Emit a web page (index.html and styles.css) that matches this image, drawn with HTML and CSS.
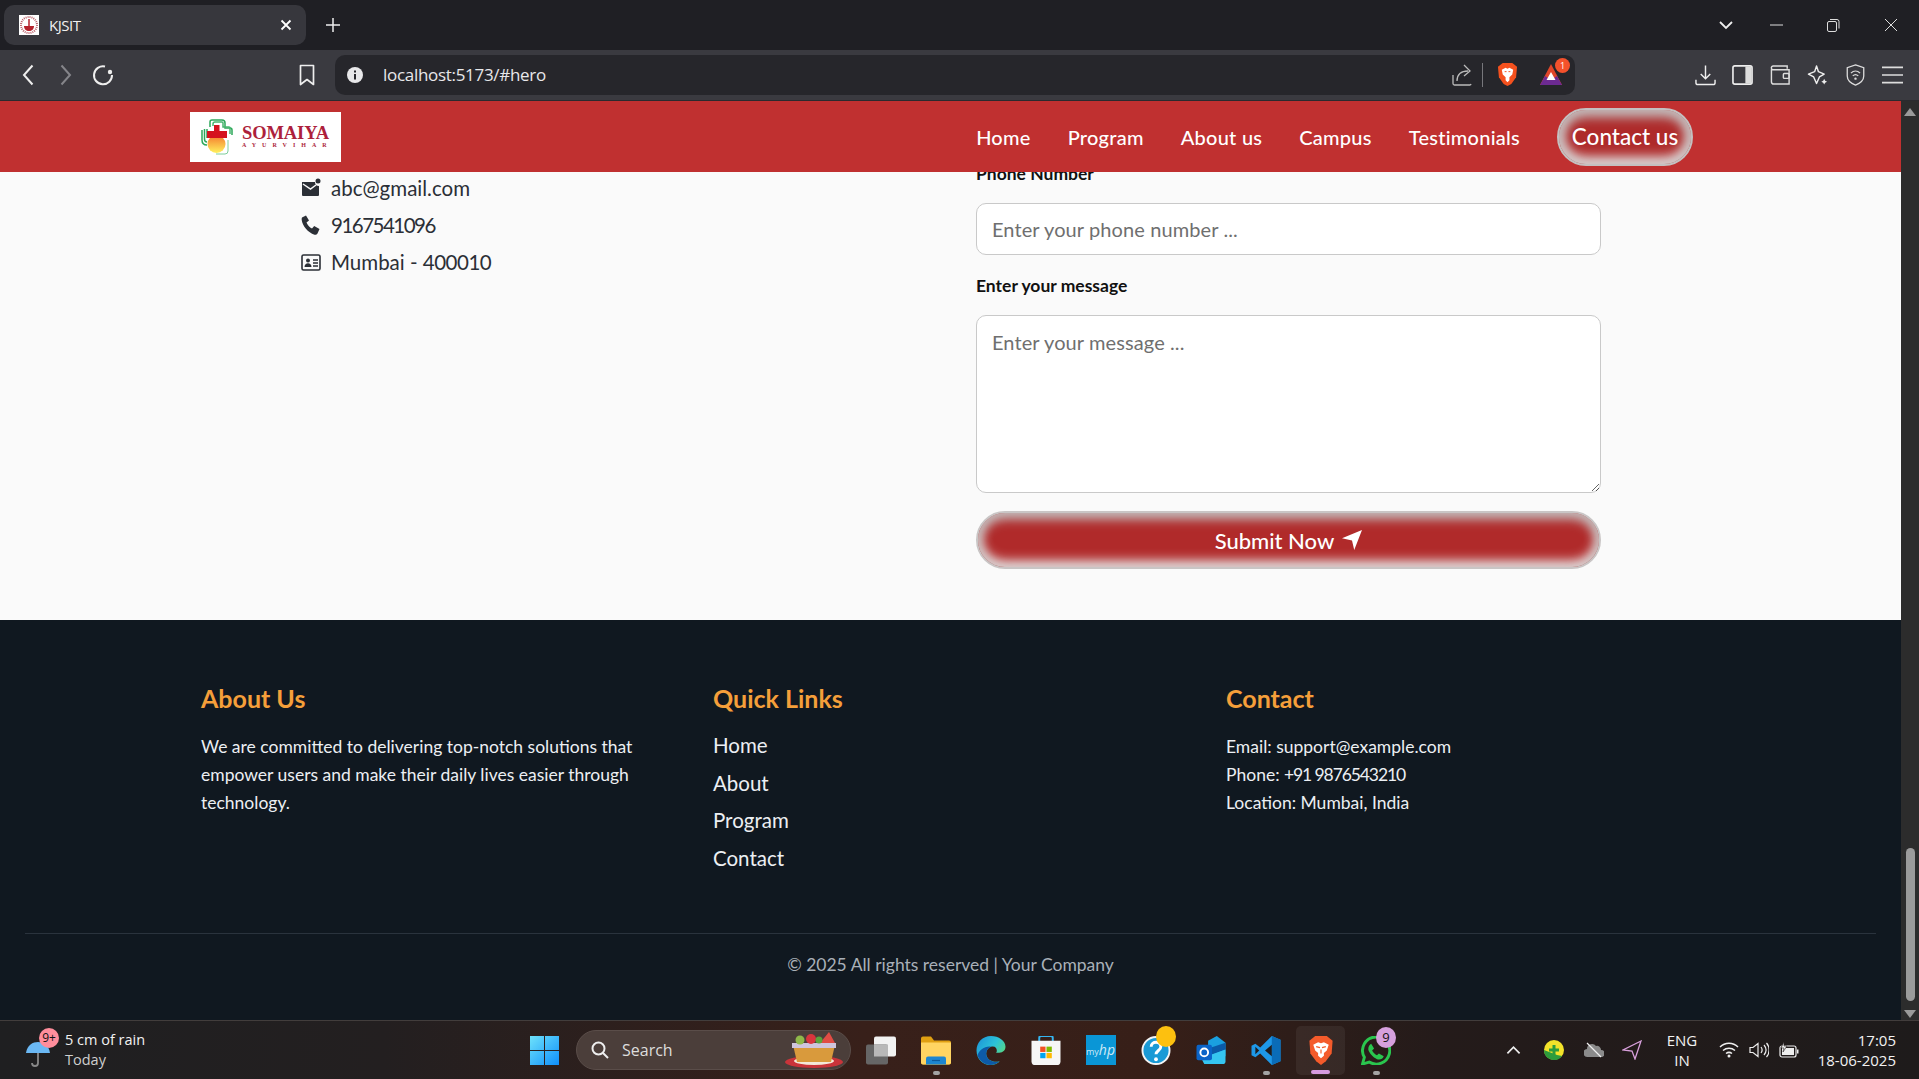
FILE: index.html
```html
<!DOCTYPE html>
<html lang="en">
<head>
<meta charset="utf-8">
<title>KJSIT</title>
<link rel="stylesheet" href="styles.css">
</head>
<body>
<div class="tabstrip">
  <div class="tab">
    <svg class="favicon" viewBox="0 0 20 20"><rect width="20" height="20" fill="#fff"/><circle cx="10" cy="10" r="8" fill="none" stroke="#b9606a" stroke-width="2" stroke-dasharray="1 1"/><path d="M5 11h10c0 3-2 5-5 5s-5-2-5-5z" fill="#b5222c"/><path d="M10 4v7" stroke="#b5222c" stroke-width="1.5"/></svg>
    <span class="tab-title">KJSIT</span>
    <svg class="tab-close" viewBox="0 0 12 12"><path d="M1.5 1.5l9 9M10.500 1.500l-9 9" stroke="#fff" stroke-width="1.800"/></svg>
  </div>
  <svg class="tab-plus" viewBox="0 0 14 14"><path d="M7 0v14M0 7h14" stroke="#eee" stroke-width="1.500"/></svg>
  <div class="win-controls">
    <svg class="wc wc-chev" viewBox="0 0 14 14"><path d="M1 4l6 6 6-6" fill="none" stroke="#eee" stroke-width="1.800"/></svg>
    <svg class="wc wc-min" viewBox="0 0 14 14"><path d="M0 7h13" stroke="#ddd" stroke-width="1"/></svg>
    <svg class="wc wc-max" viewBox="0 0 14 14"><rect x="1.500" y="3.500" width="9" height="10" rx="1.500" fill="none" stroke="#ddd"/><path d="M4 1.500h7a2 2 0 0 1 2 2v7" fill="none" stroke="#ddd"/></svg>
    <svg class="wc wc-close" viewBox="0 0 14 14"><path d="M1 1l12 12M13 1L1 13" stroke="#ddd" stroke-width="1"/></svg>
  </div>
</div>

<div class="toolbar">
  <div class="nav-btns">
    <svg class="ti-back" viewBox="0 0 12 22"><path d="M10.500 1.500L2 11l8.500 9.500" fill="none" stroke="#eee" stroke-width="2"/></svg>
    <svg class="ti-fwd" viewBox="0 0 12 22"><path d="M1.500 1.500L10 11l-8.500 9.500" fill="none" stroke="#85858a" stroke-width="2"/></svg>
    <svg class="ti-reload" viewBox="0 0 22 22"><path d="M13 2.500a9 9 0 1 0 7 8.500" fill="none" stroke="#eee" stroke-width="2"/><circle cx="18" cy="8" r="2.200" fill="#eee"/></svg>
  </div>
  <svg class="ti-bookmark" viewBox="0 0 16 22"><path d="M1.500 1.500h13v19L8 15.500l-6.500 5z" fill="none" stroke="#eee" stroke-width="1.700" stroke-linejoin="round"/></svg>
  <div class="urlbar">
    <svg class="ti-info" viewBox="0 0 16 16"><circle cx="8" cy="8" r="8" fill="#e8e8ea"/><rect x="7" y="7" width="2" height="5.500" fill="#26262b"/><rect x="7" y="3.500" width="2" height="2" fill="#26262b"/></svg>
    <span class="url-text">localhost:5173/#hero</span>
    <svg class="ti-share" viewBox="0 0 20 24"><path d="M1 12v8.500a1.500 1.500 0 0 0 1.500 1.500H18a1.500 1.500 0 0 0 1-1" fill="none" stroke="#bbb" stroke-width="1.300"/><path d="M5 18c0-7 4-10 11-10M12 2l6 6-6 5" fill="none" stroke="#bbb" stroke-width="1.300"/></svg>
    <span class="url-sep"></span>
    <svg class="ti-brave" viewBox="0 0 22 26"><path d="M6 1h10l5 4-1 11-5 7-4 2-4-2-5-7L1 5z" fill="#f4511e"/><path d="M5 8l4-2 2 1 2-1 4 2-1 5-3 3v3l-2 2-2-2v-3l-3-3z" fill="#fff"/><path d="M8 10h2M12 10h2" stroke="#f4511e" stroke-width="1"/></svg>
    <div class="bat">
      <svg class="ti-bat" viewBox="0 0 24 24"><path d="M12 1l11 21H1z" fill="#e0462a"/><path d="M1 22l5-9 6 4 6-4 5 9z" fill="#6c2a92"/><path d="M12 9l4.500 8h-9z" fill="#fff"/></svg>
      <span class="bat-badge">1</span>
    </div>
  </div>
  <div class="tools">
    <svg class="tool" viewBox="0 0 22 22"><path d="M11 1v13M6 10l5 5 5-5" fill="none" stroke="#eee" stroke-width="1.500"/><path d="M1 16v3a2 2 0 0 0 2 2h16a2 2 0 0 0 2-2v-3" fill="none" stroke="#eee" stroke-width="1.500"/></svg>
    <svg class="tool" viewBox="0 0 22 22"><rect x="1" y="1.500" width="20" height="19" rx="2" fill="none" stroke="#eee" stroke-width="1.700"/><rect x="14" y="2" width="6.500" height="18" fill="#ddd"/></svg>
    <svg class="tool" viewBox="0 0 22 22"><path d="M3 1.500h15v3M1.500 5v13a2.500 2.500 0 0 0 2.500 2.500h16V5.500H3A1.500 1.500 0 0 1 1.500 4a2 2 0 0 1 1.500-2.500" fill="none" stroke="#ddd" stroke-width="1.500"/><rect x="14" y="9.500" width="6" height="5" rx="1" fill="none" stroke="#ddd" stroke-width="1.500"/></svg>
    <svg class="tool" viewBox="0 0 22 22"><path d="M10 1.500l2 6 6 2.500-5 3-3 7-3-7-5.500-3 6.500-2.500z" fill="none" stroke="#eee" stroke-width="1.500" stroke-linejoin="round"/><path d="M18 15l1 2 2 1-2 1-1 2-1-2-2-1 2-1z" fill="#eee"/></svg>
    <svg class="tool" viewBox="0 0 22 24"><path d="M11 1l9 3v9c0 5-4 8-9 10-5-2-9-5-9-10V4z" fill="none" stroke="#ddd" stroke-width="1.400"/><path d="M6 10c3-3 7-3 10 0M8 13c2-2 4-2 6 0" fill="none" stroke="#ddd" stroke-width="1.400"/><circle cx="11" cy="16" r="1.300" fill="#ddd"/></svg>
    <svg class="tool" viewBox="0 0 22 22"><path d="M0 3h22M0 11h22M0 19h22" stroke="#ddd" stroke-width="1.800"/></svg>
  </div>
</div>

<div class="viewport">
  <div class="page">
    <header class="site-header">
      <div class="logo">
        <svg class="logo-mark" viewBox="0 0 32 36">
          <defs><linearGradient id="sun" x1="0" y1="0" x2="0" y2="1"><stop offset="0" stop-color="#f4792c"/><stop offset="1" stop-color="#fff15e"/></linearGradient></defs>
          <path d="M9 8V3a2 2 0 0 1 2-2h10a3 3 0 0 1 3 3v5h5a2 2 0 0 1 2 2v5" fill="none" stroke="#2da85a" stroke-width="1.500"/>
          <path d="M12 7V5a2 2 0 0 1 2-2h7a1 1 0 0 1 1 1v4h6a1 1 0 0 1 1 1v6" fill="none" stroke="#45b56d" stroke-width="1.500"/>
          <path d="M1 11v10c0 3 1.500 5 5 5M3.500 10v10c0 2 1 3 2.500 3M6 10v9" fill="none" stroke="#2da85a" stroke-width="1.500"/>
          <circle cx="15.500" cy="25" r="9" fill="url(#sun)"/>
          <path d="M13 6h5.500v6H26v7H6v-7h7z" fill="#d5121e"/>
          <path d="M27 21v11a3 3 0 0 1-3 3H15" fill="none" stroke="#7fce9a" stroke-width="1"/>
        </svg>
        <div class="logo-text">
          <span class="logo-name">SOMAIYA</span>
          <span class="logo-sub">AYURVIHAR</span>
        </div>
      </div>
      <nav class="site-nav">
        <a>Home</a><a>Program</a><a>About us</a><a>Campus</a><a>Testimonials</a>
      </nav>
      <a class="contact-btn">Contact us</a>
    </header>
    <section class="contact">
      <div class="contact-info">
        <div class="info-row">
          <svg class="info-icon" viewBox="0 0 20 20"><path d="M1 4h13a4 4 0 0 0 4 4v9a1 1 0 0 1-1 1H2a1 1 0 0 1-1-1z" fill="#2b2f36"/><path d="M2 6l7.500 5L15 7" fill="none" stroke="#fafafa" stroke-width="1.500"/><circle cx="17" cy="3" r="2.500" fill="#2b2f36"/></svg>
          <span>abc@gmail.com</span>
        </div>
        <div class="info-row">
          <svg class="info-icon" viewBox="0 0 20 20"><path d="M1 2.500L5 .5l3 5-2.500 2c1 2.500 3 5 5.500 6l2.200-2.500 5.300 3-2 4.500c-.5 1-2 1.500-3 1.200C7 17.500 1.500 11 .7 5c-.1-1 0-2 .3-2.500z" fill="#2b2f36"/></svg>
          <span class="tight-phone">9167541096</span>
        </div>
        <div class="info-row">
          <svg class="info-icon" viewBox="0 0 20 20"><rect x="1" y="3" width="18" height="15" rx="1.500" fill="none" stroke="#2b2f36" stroke-width="1.600"/><circle cx="7" cy="8.500" r="2" fill="#2b2f36"/><path d="M3.500 15c0-5 7-5 7 0z" fill="#2b2f36"/><path d="M12 8h5M12 11h5M12 14h5" stroke="#2b2f36" stroke-width="1.300"/></svg>
          <span>Mumbai - <span class="tight-pin">400010</span></span>
        </div>
      </div>
      <form class="contact-form">
        <label class="field-label">Phone Number</label>
        <input class="field-input" placeholder="Enter your phone number ...">
        <label class="field-label label-msg">Enter your message</label>
        <textarea class="field-area" placeholder="Enter your message ..."></textarea>
        <button class="submit-btn" type="button">Submit Now
          <svg class="submit-icon" viewBox="0 0 18 18"><path d="M18 0L11 18 9 9.500 0 7.500z" fill="#fff"/></svg>
        </button>
      </form>
    </section>
    <footer class="site-footer">
      <div class="footer-cols">
        <div>
          <h3 class="footer-title">About Us</h3>
          <p class="footer-text">We are committed to delivering top-notch solutions that<br>empower users and make their daily lives easier through<br>technology.</p>
        </div>
        <div>
          <h3 class="footer-title">Quick Links</h3>
          <ul class="footer-links"><li>Home</li><li>About</li><li>Program</li><li>Contact</li></ul>
        </div>
        <div>
          <h3 class="footer-title">Contact</h3>
          <p class="footer-text">Email: support@example.com<br>Phone: <span class="tight-digits-sm">+91 9876543210</span><br>Location: Mumbai, India</p>
        </div>
      </div>
      <div class="footer-bottom">© 2025 All rights reserved | Your Company</div>
    </footer>
  </div>
  <div class="scrollbar">
    <svg class="sb-arrow" viewBox="0 0 12 8"><path d="M6 0l6 8H0z" fill="#9a9a9a"/></svg>
    <div class="sb-track"><div class="sb-thumb"></div></div>
    <svg class="sb-arrow" viewBox="0 0 12 8"><path d="M6 8L0 0h12z" fill="#9a9a9a"/></svg>
  </div>
</div>

<div class="taskbar">
  <div class="weather">
    <div class="weather-icon">
      <svg class="umbrella" viewBox="0 0 24 28"><path d="M12 12v11a3 3 0 0 1-6 0" fill="none" stroke="#888" stroke-width="1.800"/><path d="M0 13C1 5 7 2 12 2s11 3 12 11z" fill="#6bb8f4"/></svg>
      <span class="weather-badge">9+</span>
    </div>
    <div class="weather-text"><span>5 cm of rain</span><span class="weather-sub">Today</span></div>
  </div>
  <svg class="win-logo" viewBox="0 0 29 29">
    <defs><linearGradient id="wl" x1="0" y1="0" x2="1" y2="1"><stop offset="0" stop-color="#6ee2fb"/><stop offset="1" stop-color="#0f8ffa"/></linearGradient></defs>
    <path d="M0 0h14v14H0zM15 0h14v14H15zM0 15h14v14H0zM15 15h14v14H15z" fill="url(#wl)"/>
  </svg>
  <div class="search-pill">
    <svg class="search-icon" viewBox="0 0 18 18"><circle cx="7.500" cy="7.500" r="6" fill="none" stroke="#eee" stroke-width="2"/><path d="M12 12l5 5" stroke="#eee" stroke-width="2"/></svg>
    <span class="search-text">Search</span>
    <svg class="basket" viewBox="0 0 60 36">
      <ellipse cx="30" cy="30" rx="29" ry="6" fill="#c9343a"/><ellipse cx="30" cy="29" rx="20" ry="4" fill="#f3e8d8"/>
      <path d="M9 13h42l-4 17H13z" fill="#d99a3c"/><rect x="8" y="11" width="44" height="5" fill="#cfc4dc"/>
      <circle cx="16" cy="8" r="4.500" fill="#8fb84a"/><circle cx="27" cy="7" r="5" fill="#d8343d"/><path d="M36 11L45 0l6 11z" fill="#e14c44"/><circle cx="35" cy="8" r="3.500" fill="#5ba23c"/>
    </svg>
  </div>
  <div class="apps">
    <div class="app"><svg viewBox="0 0 30 28"><rect x="8" width="22" height="20" rx="2" fill="#f2f2f2"/><rect y="8" width="22" height="20" rx="2" fill="#666"/><rect x="8" y="8" width="14" height="12" fill="#b8b8b8"/></svg></div>
    <div class="app running"><svg viewBox="0 0 30 28"><path d="M0 2a2 2 0 0 1 2-2h8l3 4h15a2 2 0 0 1 2 2v20a2 2 0 0 1-2 2H2a2 2 0 0 1-2-2z" fill="#e0a012"/><path d="M0 6h30v20a2 2 0 0 1-2 2H2a2 2 0 0 1-2-2z" fill="#ffd562"/><path d="M5 22a2 2 0 0 1 2-2h16a2 2 0 0 1 2 2v6H5z" fill="#1c86d0"/><path d="M11 24h8" stroke="#0b5a9c" stroke-width="1.200"/></svg></div>
    <div class="app"><svg viewBox="0 0 30 30"><defs><linearGradient id="edge" x1="0" y1="0" x2="1" y2=".7"><stop offset="0" stop-color="#1b8fd8"/><stop offset=".55" stop-color="#2cc3d8"/><stop offset="1" stop-color="#62dc70"/></linearGradient></defs><path d="M15 0C6 0 0 7 0 15c0 9 7 15 14 15 5 0 8-2 10-4-6 2-14-1-14-8 0-3 2-6 5-7 4-1 6 1 6 4 0 1 0 2-1 2 3 1 10 0 10-6C30 5 23 0 15 0z" fill="url(#edge)"/><path d="M24 26c-6 2-14-1-14-8 0-3 2-6 5-7-6-1-12 3-14 9 2 6 8 10 13 10 4 0 8-2 10-4z" fill="#0d5aa8"/></svg></div>
    <div class="app"><svg viewBox="0 0 30 30"><path d="M8 7V2a2 2 0 0 1 2-2h10a2 2 0 0 1 2 2v5" fill="none" stroke="#35b5f0" stroke-width="2"/><path d="M0 5h30v21a4 4 0 0 1-4 4H4a4 4 0 0 1-4-4z" fill="#f6f6f6"/><rect x="9" y="11" width="5.500" height="5.500" fill="#f25022"/><rect x="15.500" y="11" width="5.500" height="5.500" fill="#7fba00"/><rect x="9" y="17.500" width="5.500" height="5.500" fill="#00a4ef"/><rect x="15.500" y="17.500" width="5.500" height="5.500" fill="#ffb900"/></svg></div>
    <div class="app"><div class="hp-tile">my<i class="hp-word">hp</i></div></div>
    <div class="app app-badged"><svg viewBox="0 0 30 30"><circle cx="15" cy="15" r="14" fill="#1a9ad6" stroke="#f4f4f4" stroke-width="2"/><path d="M10 11c0-6 10-6 10 0 0 4-5 4-5 8" fill="none" stroke="#fff" stroke-width="3"/><circle cx="15" cy="24" r="2" fill="#fff"/></svg><span class="dot-yellow"></span></div>
    <div class="app"><svg viewBox="0 0 30 30"><path d="M12 5l9-5 9 7v14H12z" fill="#1aa0e0"/><path d="M12 13l18-6v7l-18 7z" fill="#0a5aa8"/><path d="M5 23l25-9v12a3 3 0 0 1-3 3H8z" fill="#35c5f0"/><rect y="9" width="16" height="16" rx="2" fill="#0a64c8"/><circle cx="8" cy="17" r="4" fill="none" stroke="#fff" stroke-width="2"/></svg></div>
    <div class="app running"><svg viewBox="0 0 30 30"><path d="M21 0l9 4v22l-9 4L9 18l-5 4-4-2V10l4-2 5 4z" fill="#1e98e8"/><path d="M21 0v30l9-4V4z" fill="#0a6cb8"/><path d="M21 9l-7 6 7 6zM4 11v8l4-4z" fill="#201d1f"/></svg></div>
    <div class="app app-active"><svg viewBox="0 0 26 30"><path d="M7 0h12l6 5-1 13-6 8-5 4-5-4-6-8L1 5z" fill="#f4511e"/><path d="M5 9l5-2.500 3 1 3-1 5 2.500-2 6-3 2.500v3l-3 2.500-3-2.500v-3L7 15z" fill="#fff"/><path d="M8 11l4 1M18 11l-4 1M13 14v4" stroke="#f4511e" stroke-width="1.200"/></svg><span class="active-bar"></span></div>
    <div class="app running app-badged"><svg viewBox="0 0 30 30"><path d="M15 1a14 14 0 0 0-12 21L1 29l7-2A14 14 0 1 0 15 1z" fill="none" stroke="#2ac54e" stroke-width="3"/><path d="M10 8l3 5-2 2c1 2 3 4 5 5l2-2 5 3c-1 3-4 4-7 3-4-2-8-6-9-10 0-3 1-5 3-6z" fill="#2ac54e"/></svg><span class="dot-purple">9</span></div>
  </div>
  <div class="tray">
    <svg class="tray-caret" viewBox="0 0 16 10"><path d="M1.500 8.500L8 2l6.500 6.500" fill="none" stroke="#eee" stroke-width="1.800"/></svg>
    <svg class="tray-ico tray-green" viewBox="0 0 20 20"><circle cx="10" cy="10" r="10" fill="#f3e32a"/><path d="M0 10a10 10 0 0 0 18 6l-5-1z" fill="#2c9c3c"/><path d="M10 5v10M5 10h10" stroke="#2c9c3c" stroke-width="3"/></svg>
    <svg class="tray-ico tray-cloud" viewBox="0 0 20 16"><path d="M4 15a4 4 0 0 1-1-8 5 5 0 0 1 9-3 4 4 0 0 1 5 4 3.500 3.500 0 0 1 0 7z" fill="#8b8b8b"/><path d="M3 1l14 14" stroke="#eee" stroke-width="1.300"/></svg>
    <svg class="tray-ico tray-send" viewBox="0 0 20 20"><path d="M19 1L1 10l9 1 3 8z" fill="none" stroke="#d8a0dc" stroke-width="1.300"/></svg>
    <div class="tray-lang"><span>ENG</span><span>IN</span></div>
    <svg class="tray-ico tray-wifi" viewBox="0 0 20 16"><path d="M1 5c5-5 13-5 18 0M4 8.500c3.500-3 8.500-3 12 0M7 11.500c2-1.500 4-1.500 6 0" fill="none" stroke="#eee" stroke-width="1.500"/><circle cx="10" cy="14" r="1.500" fill="#eee"/></svg>
    <svg class="tray-ico tray-vol" viewBox="0 0 20 16"><path d="M1 5.500h3L9 1.500v13L4 10.500H1z" fill="none" stroke="#eee" stroke-width="1.200"/><path d="M12 5c1.500 2 1.500 4 0 6M15 3c2.500 3 2.500 7 0 10M17.500 1c3.500 4 3.500 10 0 14" fill="none" stroke="#eee" stroke-width="1.200"/></svg>
    <svg class="tray-ico tray-batt" viewBox="0 0 20 16"><rect x="1" y="4" width="16" height="11" rx="2" fill="none" stroke="#eee" stroke-width="1.200"/><rect x="3" y="6" width="12" height="7" fill="#eee"/><rect x="18" y="7.500" width="1.500" height="4" fill="#eee"/><path d="M5 0L2 6h3l-1 4 4-6H5z" fill="#eee" stroke="#211d1c" stroke-width=".6"/></svg>
    <div class="tray-clock"><span>17:05</span><span>18-06-2025</span></div>
  </div>
</div>
</body>
</html>
```

FILE: styles.css
```css
* { box-sizing: border-box; }
html, body { margin: 0; height: 100%; overflow: hidden; }
body {
  width: 1919px;
  height: 1079px;
  display: flex;
  flex-direction: column;
  font-family: "Lato", "Open Sans", sans-serif;
  background: #fafafa;
}

/* Browser chrome */
.tabstrip {
  height: 50px;
  flex: none;
  background: #1f1f24;
  display: flex;
  align-items: center;
  padding-left: 4px;
}
.tab {
  width: 302px;
  height: 40px;
  background: #37373d;
  border-radius: 10px;
  display: flex;
  align-items: center;
  padding: 0 14px 0 15px;
}
.favicon { width: 20px; height: 20px; }
.tab-title {
  margin-left: 10px;
  color: #f0f0f0;
  font: 15px "Open Sans", sans-serif;
  letter-spacing: -.5px;
  flex: 1;
}
.tab-close { width: 12px; height: 12px; }
.tab-plus { width: 14px; height: 14px; margin-left: 20px; }
.win-controls { margin-left: auto; display: flex; align-items: center; height: 100%; }
.wc { width: 14px; height: 14px; }
.wc-chev { margin-right: 37px; }
.wc-min { margin-right: 42px; }
.wc-max { margin-right: 44px; }
.wc-close { margin-right: 21px; }

.toolbar {
  height: 51px;
  flex: none;
  background: #3a3a40;
  border-bottom: 1px solid #2a2a2e;
  display: flex;
  align-items: center;
  padding-bottom: 1px;
}
.nav-btns { display: flex; align-items: center; padding-left: 22px; width: 299px; }
.ti-back, .ti-fwd { width: 12px; height: 22px; }
.ti-fwd { margin-left: 26px; }
.ti-reload { width: 22px; height: 22px; margin-left: 20px; }
.ti-bookmark { width: 16px; height: 22px; }
.urlbar {
  margin-left: 20px;
  width: 1240px;
  height: 40px;
  background: #26262b;
  border-radius: 10px;
  display: flex;
  align-items: center;
  padding-left: 12px;
}
.ti-info { width: 16px; height: 16px; }
.url-text { margin-left: 20px; color: #e8e8ea; font: 17px "Open Sans", sans-serif; letter-spacing: -.3px; flex: 1; }
.ti-share { width: 20px; height: 24px; }
.url-sep { width: 1px; height: 24px; background: #77777c; margin: 0 13px 0 10px; }
.ti-brave { width: 21px; height: 25px; margin-left: 1px; }
.bat { position: relative; width: 24px; height: 24px; margin: 0 12px 0 21px; }
.ti-bat { width: 24px; height: 24px; display: block; }
.bat-badge {
  position: absolute;
  top: -5px;
  right: -7px;
  width: 15px;
  height: 15px;
  border-radius: 50%;
  background: #f4512c;
  color: #fff;
  font: 9px/15px "Open Sans", sans-serif;
  text-align: center;
}
.tools { display: flex; align-items: center; gap: 16.400px; margin-left: 120px; }
.tool { width: 21px; height: 22px; }

/* Page */
.viewport { flex: 1; min-height: 0; display: flex; }
.page { flex: 1; min-width: 0; display: flex; flex-direction: column; overflow: hidden; }

.site-header {
  height: 71px;
  flex: none;
  background: #c03030;
  display: flex;
  align-items: center;
  padding: 0 208px 0 190px;
  position: relative;
  z-index: 2;
}
.logo {
  width: 151px;
  height: 50px;
  background: #fff;
  display: flex;
  align-items: center;
  padding-left: 11px;
  gap: 9px;
  margin-right: auto;
}
.logo-mark { width: 32px; height: 36px; }
.logo-text { display: flex; flex-direction: column; align-items: flex-start; }
.logo-name { font: 700 18.500px/18px "Liberation Serif", serif; color: #ad1f3c; letter-spacing: -.1px; }
.logo-sub { font: 700 6px/7px "Liberation Serif", serif; color: #ad1f3c; letter-spacing: 6px; white-space: nowrap; }
.site-nav { display: flex; gap: 37px; margin-right: 37px; }
.site-nav a { color: #fff; font-size: 20px; font-weight: 500; letter-spacing: .25px; white-space: nowrap; }
.contact-btn {
  width: 136px;
  height: 58px;
  border-radius: 29px;
  border: 2px solid #c4c0c0;
  background: #ae2a2a;
  box-shadow: inset 0 4px 12px 3px #bfb4b4, inset 0 -4px 12px 3px #e6e2e2;
  color: #fff;
  font-size: 22.500px;
  font-weight: 500;
  white-space: nowrap;
  display: flex;
  align-items: center;
  justify-content: center;
}

.contact {
  height: 448px;
  flex: none;
  display: flex;
  padding-left: 301px;
  background: #fafafa;
}
.contact-info {
  width: 675px;
  padding-top: 4px;
  display: flex;
  flex-direction: column;
  gap: 13px;
}
.info-row {
  height: 24px;
  display: flex;
  align-items: center;
  gap: 10px;
  color: #2b2f36;
  font-size: 20.500px;
}
.tight-phone { letter-spacing: -1.500px; }
.tight-pin { letter-spacing: -.5px; }
.tight-digits-sm { letter-spacing: -1.100px; }
.info-icon { width: 20px; height: 20px; }
.contact-form { width: 625px; display: flex; flex-direction: column; margin-top: -9px; }
.field-label { font-size: 17.500px; font-weight: 700; color: #111; line-height: 22px; }
.label-msg { margin-top: 20px; }
.field-input, .field-area {
  width: 625px;
  border: 1px solid #c9c9c9;
  border-radius: 10px;
  background: #fff;
  font: 20px "Lato", sans-serif;
  letter-spacing: .1px;
  padding: 0 15px;
  outline: none;
}
.field-input { height: 52px; margin-top: 18px; }
.field-area { height: 178px; margin-top: 18px; padding-top: 14px; }
.field-input::placeholder, .field-area::placeholder { color: #6f6f6f; opacity: 1; }
.submit-btn {
  margin-top: 18px;
  height: 58px;
  border-radius: 29px;
  border: 2px solid #c9c5c5;
  background: #b02a2a;
  box-shadow: inset 0 4px 12px 2px #bfb4b4, inset 0 -4px 12px 2px #eeeaea;
  color: #fff;
  font: 500 22px "Lato", sans-serif;
  display: flex;
  align-items: center;
  justify-content: center;
  gap: 8px;
}
.submit-icon { width: 20px; height: 20px; }

.site-footer { flex: 1; min-height: 0; background: #101820; display: flex; flex-direction: column; padding: 0 25px; }
.footer-cols {
  display: grid;
  grid-template-columns: 512px 513px 1fr;
  padding: 63px 0 0 176px;
  height: 313px;
}
.footer-title { margin: 0; color: #f59f3a; font-size: 25px; font-weight: 700; line-height: 30px; }
.footer-text { margin: 20px 0 0; color: #eceff3; font-size: 17.500px; line-height: 28px; white-space: nowrap; }
.footer-links { list-style: none; margin: 20px 0 0; padding: 0; color: #eceff3; font-size: 20.500px; }
.footer-links li { height: 37.600px; line-height: 25px; }
.footer-bottom {
  border-top: 1px solid #2a333d;
  padding-top: 20px;
  text-align: center;
  color: #a9b0b8;
  font-size: 17.500px;
  line-height: 22px;
}

.scrollbar { width: 18px; flex: none; background: #2c2c2c; display: flex; flex-direction: column; align-items: center; padding: 7px 0 2px; }
.sb-arrow { width: 12px; height: 8px; flex: none; }
.sb-track { flex: 1; width: 100%; display: flex; flex-direction: column; justify-content: flex-end; align-items: center; padding-bottom: 9px; }
.sb-thumb { width: 9px; height: 153px; border-radius: 5px; background: #9b9b9b; }

/* Taskbar */
.taskbar {
  height: 59px;
  flex: none;
  display: flex;
  align-items: center;
  border-top: 1px solid #423d3c;
  background: linear-gradient(90deg, #1f1f21 0%, #231f20 20%, #38201a 45%, #371f18 60%, #241b1a 75%, #1e1b1b 100%);
  color: #f2f2f2;
  font-family: "Open Sans", sans-serif;
}
.weather { display: flex; align-items: center; width: 530px; padding-left: 26px; }
.weather-icon { position: relative; width: 24px; height: 28px; margin-top: 8px; }
.umbrella { width: 24px; height: 28px; display: block; }
.weather-badge {
  position: absolute;
  top: -12px;
  left: 13px;
  width: 20px;
  height: 20px;
  border-radius: 50%;
  background: #ff8d9c;
  color: #111;
  font-size: 12px;
  line-height: 20px;
  text-align: center;
}
.weather-text { display: flex; flex-direction: column; margin-left: 15px; font-size: 14.500px; line-height: 20px; }
.weather-sub { color: #cfcfcf; }
.win-logo { width: 29px; height: 29px; flex: none; }
.search-pill {
  margin-left: 17px;
  width: 275px;
  height: 40px;
  border-radius: 20px;
  background: #4b3e3a;
  border: 1px solid #5a4d49;
  display: flex;
  align-items: center;
  padding-left: 14px;
  flex: none;
}
.search-icon { width: 18px; height: 18px; }
.search-text { margin-left: 13px; font-size: 16px; color: #ddd; flex: 1; }
.basket { width: 60px; height: 36px; margin-right: 6px; }
.apps { display: flex; margin-left: 2px; }
.app { width: 55px; height: 49px; display: flex; align-items: center; justify-content: center; position: relative; }
.app svg { width: 30px; height: 29px; }
.app.running::after {
  content: "";
  position: absolute;
  bottom: 0;
  left: 50%;
  margin-left: -3px;
  width: 7px;
  height: 4px;
  border-radius: 2px;
  background: #a3a3a3;
}
.hp-tile {
  width: 30px;
  height: 30px;
  background: #0a96d6;
  color: #cfeaf7;
  font-size: 9px;
  line-height: 30px;
  text-align: center;
  white-space: nowrap;
}
.hp-word { font-size: 14px; }
.app-active::before {
  content: "";
  position: absolute;
  inset: 0 3px;
  background: rgba(255,255,255,.06);
  border-radius: 5px;
}
.active-bar { position: absolute; bottom: 1px; left: 18px; width: 19px; height: 4px; border-radius: 2px; background: #d79be0; }
.dot-yellow { position: absolute; top: 0; left: 28px; width: 20px; height: 21px; border-radius: 50%; background: #fdc00f; }
.dot-purple {
  position: absolute;
  top: 1px;
  left: 28px;
  width: 20px;
  height: 21px;
  border-radius: 50%;
  background: #d6a0dd;
  color: #111;
  font-size: 13px;
  line-height: 21px;
  text-align: center;
}
.tray { flex: 1; display: flex; align-items: center; padding-left: 103px; }
.tray-caret { width: 15px; height: 10px; }
.tray-ico { width: 20px; height: 20px; flex: none; }
.tray-green { margin-left: 23px; }
.tray-cloud { margin-left: 20px; }
.tray-send { margin-left: 18px; }
.tray-lang { display: flex; flex-direction: column; align-items: center; font-size: 15px; line-height: 20px; margin-left: 24px; width: 32px; }
.tray-wifi { margin-left: 21px; }
.tray-vol { margin-left: 10px; }
.tray-batt { margin-left: 10px; }
.tray-clock { margin-left: 14px; width: 83px; display: flex; flex-direction: column; align-items: flex-end; font-size: 15px; line-height: 20px; white-space: nowrap; }
```
